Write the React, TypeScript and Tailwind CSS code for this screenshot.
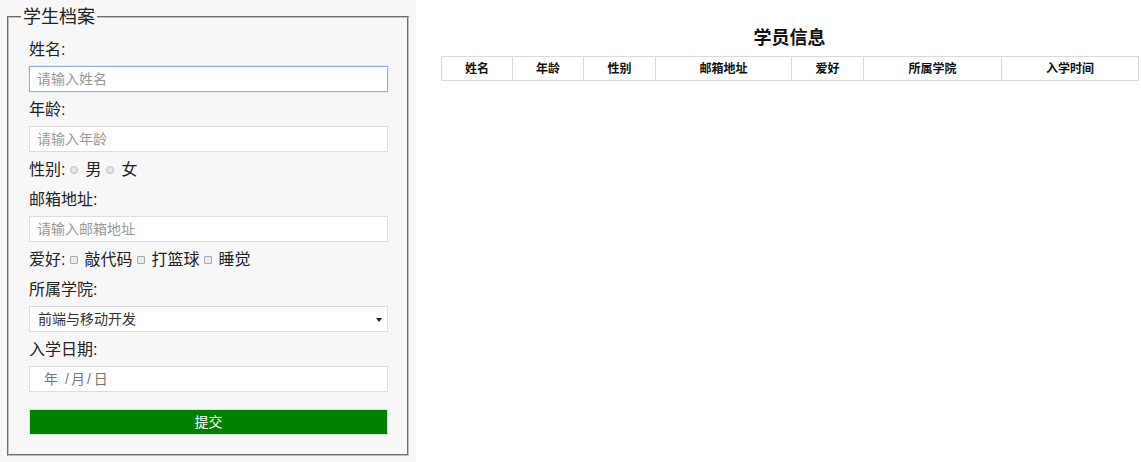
import { useState } from "react";

const FONT = "[font-family:'Liberation_Sans','Noto_Sans_CJK_SC',sans-serif]";

// 表头列宽 (px)
const columns = [
  { title: "姓名", w: "w-[71px]" },
  { title: "年龄", w: "w-[71px]" },
  { title: "性别", w: "w-[72px]" },
  { title: "邮箱地址", w: "w-[136px]" },
  { title: "爱好", w: "w-[72px]" },
  { title: "所属学院", w: "w-[138px]" },
  { title: "入学时间", w: "w-[137px]" },
];

function Radio({ label }: { label: string }) {
  return (
    <span className="flex items-center">
      <span className="ml-[5px] mr-[7px] inline-block h-[8px] w-[8px] rounded-full border border-[#bdbdbd] bg-[#e6e6e6]" />
      <span>{label}</span>
    </span>
  );
}

function Check({ label }: { label: string }) {
  return (
    <span className="flex items-center">
      <span className="ml-[5px] mr-[6px] inline-block h-[8px] w-[8px] rounded-[1px] border border-[#aaaaaa] bg-[#eaeaea]" />
      <span>{label}</span>
    </span>
  );
}

const inputBase =
  "mt-[4px] block h-[26px] w-full border bg-white px-[7px] text-[14px] text-[#333] outline-none placeholder:text-[#999]";

export default function App() {
  const [name, setName] = useState("");
  const [age, setAge] = useState("");
  const [email, setEmail] = useState("");

  return (
    <div className={`flex min-h-[462px] bg-white text-[#222] ${FONT}`}>
      {/* 左侧表单 */}
      <div className="h-[462px] w-[416px] shrink-0 bg-[#f7f7f7] pl-[7px] pt-[3px]">
        <fieldset className="w-[402px] border-2 border-[#c0c0c0] px-[12px] pb-[19px] [border-style:groove]">
          <legend className="px-[2px] text-[18px] leading-[28px]">学生档案</legend>
          <form
            className="flex w-[367px] flex-col gap-[6px] pl-[8px] pt-[7px] text-[16px] leading-[24px]"
            onSubmit={(e) => e.preventDefault()}
          >
            <div>
              <div>姓名:</div>
              <input
                value={name}
                onChange={(e) => setName(e.target.value)}
                placeholder="请输入姓名"
                className={`${inputBase} border-[#8db1ec] shadow-[0_0_1px_#8db1ec]`}
              />
            </div>
            <div>
              <div>年龄:</div>
              <input
                value={age}
                onChange={(e) => setAge(e.target.value)}
                placeholder="请输入年龄"
                className={`${inputBase} border-[#dedede]`}
              />
            </div>
            <div className="flex items-center">
              <span>性别:</span>
              <Radio label="男" />
              <Radio label="女" />
            </div>
            <div>
              <div>邮箱地址:</div>
              <input
                value={email}
                onChange={(e) => setEmail(e.target.value)}
                placeholder="请输入邮箱地址"
                className={`${inputBase} border-[#dedede]`}
              />
            </div>
            <div className="flex items-center">
              <span>爱好:</span>
              <Check label="敲代码" />
              <Check label="打篮球" />
              <Check label="睡觉" />
            </div>
            <div>
              <div>所属学院:</div>
              <div className="relative mt-[4px] h-[26px] w-full border border-[#dedede] bg-white">
                <select className="h-full w-full appearance-none bg-transparent pl-[8px] text-[14px] leading-[24px] text-[#333] outline-none">
                  <option>前端与移动开发</option>
                </select>
                <span className="pointer-events-none absolute right-[5px] top-[11px] h-0 w-0 border-x-[3px] border-t-[4px] border-x-transparent border-t-[#222]" />
              </div>
            </div>
            <div>
              <div>入学日期:</div>
              <div className="mt-[4px] flex h-[26px] w-full items-center border border-[#dedede] bg-white pl-[14px] text-[14px] text-[#777]">
                <span>年</span>
                <span className="ml-[7px]">/</span>
                <span className="ml-[2px]">月</span>
                <span className="ml-[2px]">/</span>
                <span className="ml-[3px]">日</span>
              </div>
            </div>
            <button
              type="submit"
              className="mt-[11px] h-[26px] w-full border border-[#d8e6d8] bg-[#008000] text-[14px] leading-[24px] text-white"
            >
              提交
            </button>
          </form>
        </fieldset>
      </div>

      {/* 右侧表格 */}
      <div className="pl-[25px] pt-[26px]">
        <div className="w-[697px] text-center text-[18px] font-bold leading-[24px] text-[#111]">学员信息</div>
        <table className="mt-[6px] w-[697px] table-fixed border-collapse text-[12px]">
          <thead>
            <tr>
              {columns.map((c) => (
                <th key={c.title} className={`${c.w} h-[24px] border border-[#dadada] p-0 text-center font-bold text-[#111]`}>
                  {c.title}
                </th>
              ))}
            </tr>
          </thead>
          <tbody />
        </table>
      </div>
    </div>
  );
}
